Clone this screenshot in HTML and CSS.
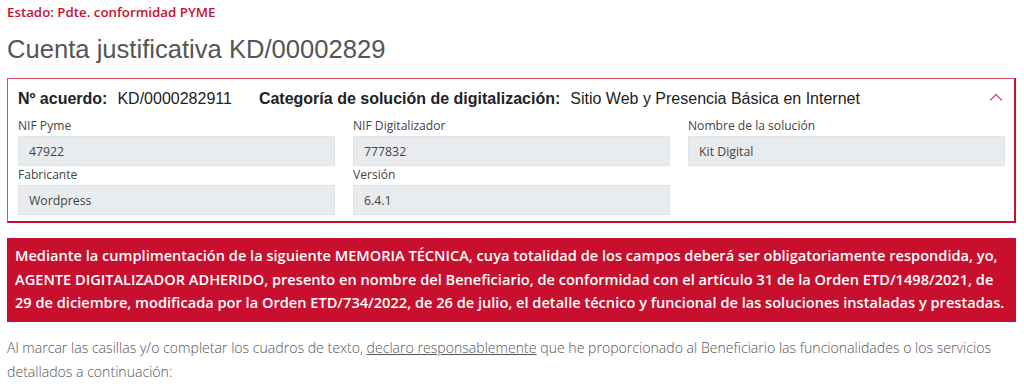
FILE: index.html
```html
<!DOCTYPE html>
<html lang="es">
<head>
  <meta charset="UTF-8">
  <meta name="viewport" content="width=device-width, initial-scale=1.0">
  <title>Cuenta justificativa</title>
  <link rel="stylesheet" href="styles.css">
</head>
<body>
  <div class="page">
    <div class="estado">Estado: Pdte. conformidad PYME</div>
    <h1 class="title">Cuenta justificativa KD/00002829</h1>

    <div class="acuerdo">
      <div class="acuerdo-head">
        <span class="key">Nº acuerdo:</span>
        <span class="val">KD/0000282911</span>
        <span class="key cat">Categoría de solución de digitalización:</span>
        <span class="val">Sitio Web y Presencia Básica en Internet</span>
        <svg class="chevron" width="14" height="8" viewBox="0 0 14 8">
          <path d="M1 7.5 L7 1.5 L13 7.5" fill="none" stroke="#e05068" stroke-width="1.4"/>
        </svg>
      </div>
      <div class="fields">
        <div class="field">
          <label>NIF Pyme</label>
          <div class="input">47922</div>
        </div>
        <div class="field">
          <label>NIF Digitalizador</label>
          <div class="input">777832</div>
        </div>
        <div class="field">
          <label>Nombre de la solución</label>
          <div class="input">Kit Digital</div>
        </div>
        <div class="field">
          <label>Fabricante</label>
          <div class="input">Wordpress</div>
        </div>
        <div class="field">
          <label>Versión</label>
          <div class="input">6.4.1</div>
        </div>
      </div>
    </div>

    <div class="aviso">
      Mediante la cumplimentación de la siguiente MEMORIA TÉCNICA, cuya totalidad de los campos deberá ser obligatoriamente respondida, yo, AGENTE DIGITALIZADOR ADHERIDO, presento en nombre del Beneficiario, de conformidad con el artículo 31 de la Orden ETD/1498/2021, de 29 de diciembre, modificada por la Orden ETD/734/2022, de 26 de julio, el detalle técnico y funcional de las soluciones instaladas y prestadas.
    </div>

    <p class="declara">Al marcar las casillas y/o completar los cuadros de texto, <span class="subrayado">declaro responsablemente</span> que he proporcionado al Beneficiario las funcionalidades o los servicios detallados a continuación:</p>
  </div>
</body>
</html>
```

FILE: styles.css
```css
body {
  margin: 0;
  font-family: "Open Sans", "Noto Sans", sans-serif;
  background-color: #fff;
  color: #333;
}

.page {
  padding: 0 8px 0 7px;
}

.estado {
  padding-top: 3px;
  font-size: 13.3px;
  font-weight: 600;
  line-height: 18px;
  color: #c8102e;
}

.title {
  margin: 13px 0 14px;
  font-family: "Liberation Sans", Arial, sans-serif;
  font-size: 25.6px;
  font-weight: normal;
  line-height: 30px;
  color: #555;
}

.acuerdo {
  border: 1px solid #e0485f;
  border-right-width: 2px;
  border-bottom-width: 2px;
  border-right-color: #c8102e;
  border-bottom-color: #c8102e;
  padding: 8px 9px 6px 10px;
}

.acuerdo-head {
  display: flex;
  align-items: center;
  height: 24px;
  margin-bottom: 6px;
  font-family: "Liberation Sans", Arial, sans-serif;
  font-size: 16px;
  color: #222;
}

.acuerdo-head .key {
  font-weight: bold;
  margin-right: 10px;
}

.acuerdo-head .cat {
  margin-left: 27px;
}

.chevron {
  margin-left: auto;
  margin-right: 2px;
  margin-bottom: 4px;
}

.fields {
  display: grid;
  grid-template-columns: repeat(3, 1fr);
  column-gap: 18px;
  row-gap: 0;
}

.field label {
  display: block;
  font-size: 12.1px;
  line-height: 18px;
  color: #444;
}

.input {
  height: 30px;
  line-height: 30px;
  padding: 0 10px;
  margin-top: 1px;
  background-color: #e9ecef;
  border: 1px solid #e2e5e8;
  box-sizing: border-box;
  font-size: 12.3px;
  color: #444;
}

.aviso {
  margin-top: 15px;
  padding: 6px 8px 7px;
  background-color: #c8102e;
  color: #fff;
  font-size: 14.6px;
  font-weight: 600;
  line-height: 23.5px;
}

.declara {
  margin: 14px 0 0;
  font-size: 14.1px;
  font-weight: 300;
  line-height: 24px;
  color: #555;
}

.subrayado {
  text-decoration: underline;
}
```
